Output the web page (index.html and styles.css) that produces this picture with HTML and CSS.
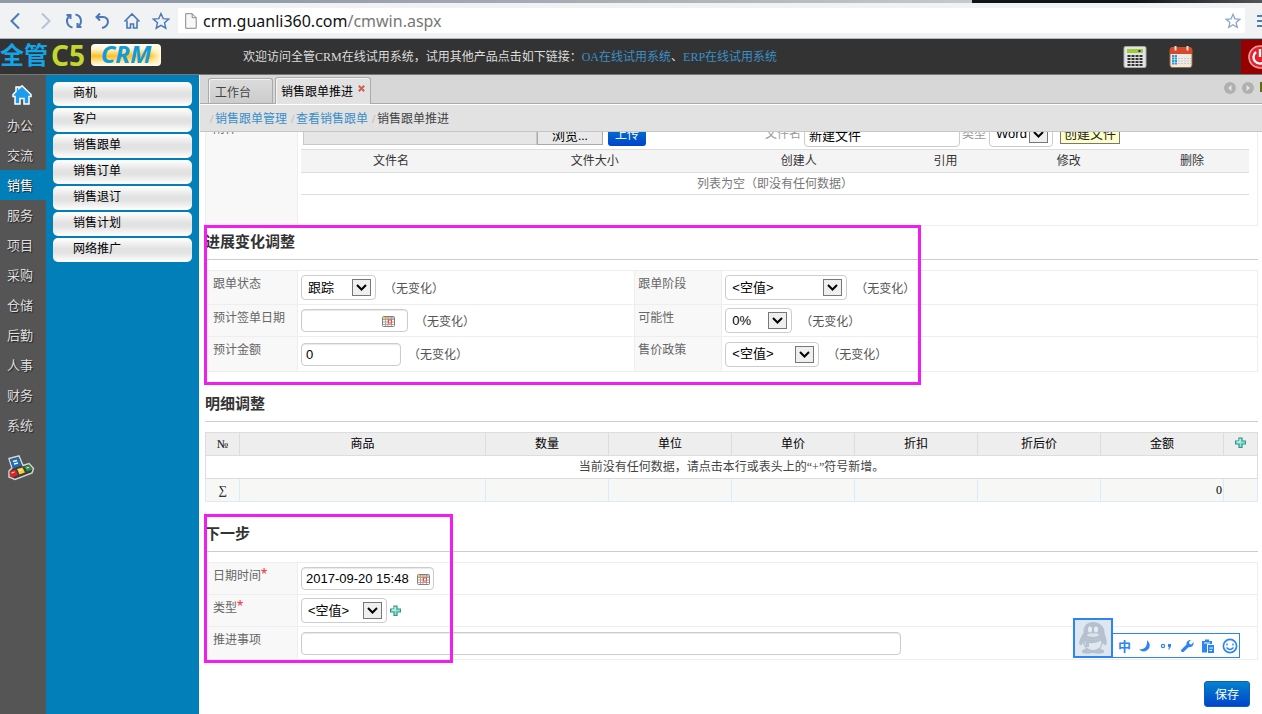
FILE: index.html
```html
<!DOCTYPE html>
<html lang="zh-CN">
<head>
<meta charset="utf-8">
<title>销售跟单推进</title>
<link rel="stylesheet" href="styles.css">
</head>
<body>
<svg class="defs" width="0" height="0" aria-hidden="true">
  <symbol id="chev" viewBox="0 0 19 17"><rect x=".5" y=".5" width="18" height="16" fill="#efefef" stroke="#777"/><path d="M5 6l4.500 4.500L14 6" fill="none" stroke="#000" stroke-width="2"/></symbol>
  <symbol id="cal" viewBox="0 0 13 11"><rect x=".5" y=".5" width="12" height="10" rx="1" fill="#fff" stroke="#8a7f78"/><path d="M1 1h6v2H1z" fill="#f3cf57"/><path d="M7 1h5v2H7z" fill="#a9c6ea"/><path d="M1 3.500h11M1 6h11M1 8.500h11M3.500 1v9M6 1v9M9.500 1v9" stroke="#a79c96" stroke-width=".9"/><rect x="6.500" y="4" width="3" height="3" fill="#fff" stroke="#f04a3c"/></symbol>
  <symbol id="plus" viewBox="0 0 11 11"><path d="M4 1h3v3h3.500v3H7v3.500H4V7H.5V4H4z" fill="#8fe3d5" stroke="#2f9488" stroke-width="1.200"/><path d="M5 2v3H2" fill="none" stroke="#d8fff6"/></symbol>
  <symbol id="star" viewBox="0 0 18 18"><path d="M9 1.500l2.200 5.100 5.500.5-4.200 3.600 1.300 5.500L9 13.300l-4.800 2.900 1.300-5.500L1.300 7.100l5.500-.5z" fill="none" stroke="currentColor" stroke-width="1.400"/></symbol>
</svg>

<header class="browser">
  <div class="tabstrip"></div>
  <div class="toolbar">
    <nav class="tools">
      <button aria-label="后退"><svg width="18" height="18" viewBox="0 0 18 18"><path d="M12 1.500L4.500 9l7.500 7.500" class="ln"/></svg></button>
      <button class="dim" aria-label="前进"><svg width="18" height="18" viewBox="0 0 18 18"><path d="M6 1.500L13.500 9 6 16.500" class="ln"/></svg></button>
      <button aria-label="刷新"><svg width="18" height="18" viewBox="0 0 18 18"><path d="M7.500 15.500C2 14.500 0 8 4.500 3.500M1.500 3h4v4M10.500 2.500C16 3.500 18 10 13.500 14.500M16.500 15h-4v-4" class="ln"/></svg></button>
      <button aria-label="撤销"><svg width="18" height="18" viewBox="0 0 18 18"><path d="M6 1.500L2.500 5 6 8.500M3 5h6c6.500 0 7 9-1 11" class="ln"/></svg></button>
      <button aria-label="主页"><svg width="18" height="18" viewBox="0 0 18 18"><path d="M1.500 9.500L9 2l7.500 7.500M4 8.500V16h3.500v-4h3v4H14V8.500" class="ln thin"/></svg></button>
      <button aria-label="收藏"><svg width="18" height="18"><use href="#star"/></svg></button>
    </nav>
    <div class="address">
      <svg width="12" height="16" viewBox="0 0 12 16"><path d="M.7.7h6.500l4 4v10.600H.7z" fill="#f8f8f8" stroke="#888"/><path d="M7.200.7v4h4" fill="none" stroke="#888"/></svg>
      <span class="url">crm.guanli360.com<span class="path">/cmwin.aspx</span></span>
      <svg class="fav" width="16" height="16"><use href="#star"/></svg>
    </div>
    <button class="menu" aria-label="菜单"><svg width="16" height="14" viewBox="0 0 16 14"><path d="M0 2h16M0 7h16M0 12h16" stroke="#4a7ebb" stroke-width="2"/></svg></button>
  </div>
</header>

<header class="apphead">
  <div class="logo"><span class="cn">全管</span><span class="c5">C5</span><span class="crm">CRM</span></div>
  <p class="welcome">欢迎访问全管CRM在线试用系统，试用其他产品点击如下链接：<a href="#">OA在线试用系统</a>、<a href="#">ERP在线试用系统</a></p>
  <div class="actions">
    <button aria-label="计算器"><svg width="24" height="22" viewBox="0 0 24 22"><rect x="1" y=".5" width="22" height="21" rx="1.500" fill="#e4e4e4" stroke="#aaa"/><rect x="4" y="3" width="16" height="4" fill="#9ccc3c"/><path d="M15.500 4h2v2h-2z" fill="#234"/><g stroke="#333" stroke-width="2" stroke-dasharray="3 1"><path d="M4.500 10h15M4.500 13h15M4.500 16h15M4.500 19h15"/></g></svg></button>
    <button aria-label="日历"><svg width="24" height="22" viewBox="0 0 24 22"><rect x="1" y="1.500" width="22" height="20" rx="2.500" fill="#eeeae6" stroke="#a9692d"/><path d="M1 8V4q0-2.500 2.500-2.500h17Q23 1.500 23 4v4z" fill="#d9482b"/><path d="M6.500 0v4.500M18.500 0v4.500" stroke="#f3dcd5" stroke-width="2"/><path d="M3 10h5M3 12.500h5M3 15h5M3 17.500h5" stroke="#2e95dc" stroke-width="2" stroke-dasharray="2.200 .6"/><path d="M9 12.500h13M9 15h13M9 17.500h13" stroke="#cfcac6" stroke-dasharray="2 1"/></svg></button>
    <button class="power" aria-label="退出"><svg width="24" height="24" viewBox="0 0 24 24"><circle cx="12" cy="12" r="11" fill="#e3202c" stroke="#f7a0a0" stroke-width="1.600"/><path d="M8 7a6.500 6.500 0 1 0 8 0M12 4v8" fill="none" stroke="#fff" stroke-width="2.400"/></svg></button>
  </div>
</header>

<div class="shell">
  <nav class="rail">
    <a class="home" href="#" aria-label="首页"><svg width="20" height="20" viewBox="0 0 20 20"><path d="M10 .8L19 9.500v2h-2V19h-5v-5.500H8V19H3v-7.500H1v-2L4 6.500V2h3v1.500z" fill="#1b9cf0" stroke="#fff" stroke-width="1.500"/></svg></a>
    <a href="#">办公</a><a href="#">交流</a><a href="#" class="on">销售</a><a href="#">服务</a><a href="#">项目</a><a href="#">采购</a><a href="#">仓储</a><a href="#">后勤</a><a href="#">人事</a><a href="#">财务</a><a href="#">系统</a>
    <a class="apps" href="#" aria-label="应用"><svg width="28" height="26" viewBox="0 0 28 26"><path d="M2 3.500L12 1l4 9.500 6-2 4.500 5-1.500 4.500L8 24.500 2 22v-6l3-3z" fill="#3c3c3c" stroke="#d5d5d5" stroke-width="1.500"/><path d="M3 4.500l8.500-2.200 3 8.200-8.500 3z" fill="#2869b4"/><path d="M6 6.500l4-1M7 9l4-1" stroke="#dff" stroke-width="1.300"/><path d="M2.500 16.500l6-2 2.500 5.500-6 2.500-2-1.500z" fill="#dc2523"/><path d="M10 14l5.500-1.500 2.500 5-5.500 2z" fill="#f6ce34"/><path d="M17 11.500l5-1.500 3.500 4.500-5.500 2z" fill="#2f9044"/><path d="M4.500 18l3-1M12 15.500l2.500-.7M19.500 13l2.500-.7" stroke="#fff"/></svg></a>
  </nav>
  <nav class="submenu">
    <a href="#">商机</a><a href="#">客户</a><a href="#">销售跟单</a><a href="#">销售订单</a><a href="#">销售退订</a><a href="#">销售计划</a><a href="#">网络推广</a>
  </nav>
  <main class="main">
    <div class="tabs">
      <a href="#" class="tab">工作台</a>
      <a href="#" class="tab cur">销售跟单推进<svg width="7" height="7" viewBox="0 0 7 7"><path d="M.8.800l5.400 5.400M6.200.8L.8 6.200" stroke="#cb6256" stroke-width="2"/></svg></a>
      <div class="pager">
        <button aria-label="上一个"><svg width="12" height="12" viewBox="0 0 12 12"><circle cx="6" cy="6" r="6" fill="#b0b0b0"/><path d="M7.500 3v6L4 6z" fill="#e4e4e4"/></svg></button>
        <button aria-label="下一个"><svg width="12" height="12" viewBox="0 0 12 12"><circle cx="6" cy="6" r="6" fill="#b0b0b0"/><path d="M4.500 3v6L8 6z" fill="#e4e4e4"/></svg></button>
        <i></i>
      </div>
    </div>
    <div class="crumbs"><i>/</i><a href="#">销售跟单管理</a><i>/</i><a href="#">查看销售跟单</a><i>/</i><span>销售跟单推进</span></div>

    <div class="viewport">
      <form class="page">
        <div class="attach">
          <div class="lab">附件</div>
          <div class="files">
            <div class="filebar">
              <input class="picked" aria-label="附件" readonly><button type="button" class="browse">浏览...</button>
              <button type="button" class="blue">上传</button>
              <label class="fname" for="fname">文件名</label><input id="fname" class="box" value="新建文件">
              <label class="ftype" for="ftype">类型</label><span class="sel w64"><select id="ftype"><option>Word</option></select><svg><use href="#chev"/></svg></span>
              <button type="button" class="create">创建文件</button>
            </div>
            <table class="filelist">
              <colgroup><col class="f1"><col class="f2"><col class="f3"><col class="f4"><col class="f5"><col class="f6"></colgroup>
              <thead><tr><th>文件名</th><th>文件大小</th><th>创建人</th><th>引用</th><th>修改</th><th>删除</th></tr></thead>
              <tbody><tr><td colspan="6">列表为空（即没有任何数据）</td></tr></tbody>
            </table>
          </div>
        </div>

        <section class="part">
          <h3>进展变化调整</h3>
          <div class="fields two">
            <label for="s1">跟单状态</label>
            <div><span class="sel w75"><select id="s1"><option>跟踪</option></select><svg><use href="#chev"/></svg></span><em>（无变化）</em></div>
            <label for="s2">跟单阶段</label>
            <div><span class="sel w122"><select id="s2"><option>&lt;空值&gt;</option></select><svg><use href="#chev"/></svg></span><em>（无变化）</em></div>
            <label for="d1">预计签单日期</label>
            <div><span class="date w107"><input id="d1" class="box"><svg><use href="#cal"/></svg></span><em>（无变化）</em></div>
            <label for="s3">可能性</label>
            <div><span class="sel w67"><select id="s3"><option>0%</option></select><svg><use href="#chev"/></svg></span><em>（无变化）</em></div>
            <label for="n1">预计金额</label>
            <div><input id="n1" class="box w100" value="0"><em>（无变化）</em></div>
            <label for="s4">售价政策</label>
            <div><span class="sel w94"><select id="s4"><option>&lt;空值&gt;</option></select><svg><use href="#chev"/></svg></span><em>（无变化）</em></div>
          </div>
          <i class="mark wide"></i>
        </section>

        <section class="part">
          <h3>明细调整</h3>
          <table class="grid">
            <colgroup><col class="edge"><col class="goods"><col><col><col><col><col><col><col class="edge"></colgroup>
            <thead><tr><th>№</th><th>商品</th><th>数量</th><th>单位</th><th>单价</th><th>折扣</th><th>折后价</th><th>金额</th><th><button type="button" class="add" aria-label="新增"><svg width="11" height="11"><use href="#plus"/></svg></button></th></tr></thead>
            <tbody><tr><td colspan="9">当前没有任何数据，请点击本行或表头上的“+”符号新增。</td></tr></tbody>
            <tfoot><tr><td class="sum">∑</td><td></td><td></td><td></td><td></td><td></td><td></td><td class="num">0</td><td></td></tr></tfoot>
          </table>
        </section>

        <section class="part">
          <h3>下一步</h3>
          <div class="fields one">
            <label for="t1">日期时间<b>*</b></label>
            <div><span class="date w133"><input id="t1" class="box" value="2017-09-20 15:48"><svg><use href="#cal"/></svg></span></div>
            <label for="s5">类型<b>*</b></label>
            <div><span class="sel w86"><select id="s5"><option>&lt;空值&gt;</option></select><svg><use href="#chev"/></svg></span><button type="button" class="add" aria-label="新增类型"><svg width="11" height="11"><use href="#plus"/></svg></button></div>
            <label for="m1">推进事项</label>
            <div><input id="m1" class="box w600"></div>
          </div>
          <i class="mark narrow"></i>
        </section>
        <div class="foot"><button type="button" class="blue save">保存</button></div>
      </form>
    </div>
  </main>
</div>

<div class="ime">
  <span class="penguin"><svg width="32" height="34" viewBox="0 0 32 34"><path d="M16 1C9 1 6 6 6.500 12 3 17 1 22 3 24q1 1 3-2 1 4 3 5.500Q4 29 5 31.500q2 2 11 .5 9 1.500 11-.5 1-2.500-4-4 2-1.500 3-5.500 2 3 3 2 2-2-1.500-12C28 6 23 1 16 1z" fill="#b5c1cf"/><path d="M9 17q7 4 14 0 3 6-1 10-6 4-12 0-4-4-1-10z" fill="#e2e7ee"/><ellipse cx="13" cy="8.500" rx="2" ry="3" fill="#e8edf3"/><ellipse cx="19" cy="8.500" rx="2" ry="3" fill="#e8edf3"/><ellipse cx="16" cy="14" rx="6" ry="1.800" fill="#dce3eb"/><path d="M7 16q9 6 18 0l1 2.500q-9 5-14 3.500v4H8.500v-5L6 18.500z" fill="#b5c1cf"/></svg></span>
  <div class="imebar">
    <span class="zh">中</span>
    <svg width="14" height="14" viewBox="0 0 14 14"><path d="M9 1q5 5 1 9.500-4 4-9 0 5 0 7-3 1.500-3 1-6.500z" fill="#2a86f3"/></svg>
    <svg width="14" height="14" viewBox="0 0 14 14"><circle cx="4" cy="7" r="1.600" fill="none" stroke="#2a86f3" stroke-width="1.200"/><path d="M9 5h3q.5 4-3 6 1-2 1-3H9z" fill="#2a86f3"/></svg>
    <svg width="14" height="14" viewBox="0 0 14 14"><path d="M1 11l5.500-5.500Q6 2 9.500 1H11L9 3l.5 2 2 .5L13.500 3v2q-1 3.500-5 3.300L3.500 13H2l-1-1z" fill="#2a86f3"/></svg>
    <svg width="14" height="14" viewBox="0 0 14 14"><path d="M1 2h3V.500h4V2h3v3H6v8.500H1z" fill="#2a86f3"/><path d="M7 6h6v8H7z" fill="#2a86f3"/><path d="M3 4h6" stroke="#fff"/><path d="M8.500 9H12M8.500 11.500H11" stroke="#fff"/></svg>
    <svg width="16" height="16" viewBox="0 0 16 16"><circle cx="8" cy="8" r="6.600" fill="none" stroke="#2a86f3" stroke-width="1.700"/><path d="M5 5.500v2M11 5.500v2M4.500 9.500q3.500 4 7 0" fill="none" stroke="#2a86f3" stroke-width="1.400"/></svg>
  </div>
</div>
</body>
</html>
```
FILE: styles.css
```css
* { box-sizing: border-box; }
html, body { margin: 0; height: 100%; }
body {
  display: flex; flex-direction: column; overflow: hidden; background: #fff; color: #333;
  font: 12px/16px "Liberation Serif", "Noto Sans CJK SC", serif;
}
button, input, select { font-family: inherit; font-size: inherit; margin: 0; padding: 0; }
button { border: 0; background: none; cursor: pointer; }
a { color: #3a8fc8; text-decoration: none; }
i, em { font-style: normal; }
svg { display: block; flex: none; }
.defs { position: absolute; }

/* browser chrome */
.browser { flex: none; background: #f1f2f4; border-bottom: 1px solid #a9b7c2; }
.tabstrip { height: 3px; background: linear-gradient(90deg, #8f9aa6 0 16%, #a9afb5 48%, #c5c8cc 77%, #10151a 77% 90%, #555 100%); }
.toolbar { display: flex; align-items: center; height: 35px; padding-left: 7px; overflow: hidden; }
.tools { display: flex; gap: 11px; color: #4a78b8; }
.tools button { color: inherit; }
.tools .dim { color: #b3c3da; }
.ln { fill: none; stroke: currentColor; stroke-width: 2; }
.thin { stroke-width: 1.600; }
.address { flex: 1; display: flex; align-items: center; gap: 6px; height: 25px; margin-left: 8px; padding: 0 4px 0 7px; background: #fff; }
.url { flex: 1; font: 16px/24px "Noto Sans", "Open Sans", sans-serif; color: #111; }
.url .path { color: #777; }
.fav { color: #8ba4cb; }
.menu { flex: none; width: 5px; overflow: hidden; margin-left: 12px; }

/* application header */
.apphead { flex: none; display: flex; align-items: center; height: 36px; background: #333; border-bottom: 1px solid #777; }
.logo { display: flex; align-items: center; flex: none; width: 243px; padding-bottom: 4px; font: bold 24px/32px "Noto Sans", "Noto Sans CJK SC", sans-serif; white-space: nowrap; }
.logo .cn { color: #13a5e8; }
.logo .c5 { margin-left: 3px; font-size: 28px; color: #c3d82e; width: 40px; }
.logo .crm { height: 22px; width: 70px; border-radius: 4px; text-align: center; line-height: 20px; font-size: 24px; font-style: italic; color: #119ade; background: linear-gradient(90deg, transparent 85%, #fffbe0), linear-gradient(#fff, #fff3c4 25%, #fbc02a 55%, #fde9a0 80%, #fff); }
.welcome { flex: 1; margin: 0; color: #ddd; }
.actions { display: flex; align-items: center; gap: 22px; flex: none; }
.actions .power { width: 21px; height: 34px; margin-left: 26px; padding-left: 7px; background: #970000; overflow: hidden; }

.shell { flex: 1; display: flex; min-height: 0; }
.rail { flex: none; width: 46px; background: #555; display: flex; flex-direction: column; }
.rail a { height: 30px; padding-left: 7px; font-size: 13px; line-height: 32px; color: #ddd; text-shadow: 1px 1px 1px #222; }
.rail .on { background: #027fb9; color: #fff; }
.rail .home { height: 35px; padding: 10px 12px 0; }
.rail .apps { height: 50px; padding-top: 15px; }
.submenu { flex: none; width: 153px; padding: 7px; background: #027fb9; display: flex; flex-direction: column; gap: 2px; }
.submenu a { height: 24px; padding-left: 20px; line-height: 22px; border-radius: 5px; color: #000; background: linear-gradient(#fff, #e2e2e2 45%, #e2e2e2 60%, #fff); }

.main { flex: 1; min-width: 0; margin-left: 1px; display: flex; flex-direction: column; }
.tabs { flex: none; display: flex; align-items: flex-end; gap: 2px; height: 29px; padding-left: 8px; background: #d7d7d7; border-bottom: 1px solid #aaa; }
.tab { height: 25px; padding: 0 21px 0 6px; line-height: 28px; border: 1px solid #aaa; border-bottom: 0; border-radius: 3px 3px 0 0; color: #444; background: linear-gradient(#dcdcdc, #ccc); box-shadow: inset 1px 1px #f4f4f4; }
.tab.cur { display: flex; gap: 5px; padding: 0 5px; margin-bottom: -1px; height: 27px; line-height: 28px; color: #000; background: #e2e2e2; }
.tab.cur svg { margin-top: 7px; }
.pager { flex: 1; display: flex; justify-content: flex-end; gap: 6px; padding-bottom: 9px; }
.pager i { width: 2px; height: 10px; background: #66680c; }
.crumbs { flex: none; height: 28px; padding-left: 10px; line-height: 28px; background: #e2e2e2; border-top: 1px solid #fff; border-bottom: 1px solid #c6c6c6; display: flex; color: #444; }
.crumbs i { width: 5px; color: #aaa; }
.crumbs a { margin-right: 4px; }

/* scrolled document */
.viewport { flex: 1; overflow: hidden; }
.page { margin: -20px 4px 0 5px; }
.attach { display: flex; height: 114px; border: 1px solid #eee; }
.lab { flex: none; width: 92px; padding: 8px 7px; color: #666; background: #f8f8f8; border-right: 1px solid #eee; }
.files { flex: 1; padding: 6px 8px 0 3px; }
.filebar { display: flex; align-items: center; height: 30px; color: #999; }
.picked { width: 234px; height: 22px; margin-left: 2px; background: #e6e6e6; border: 1px solid #c8c8c8; }
.browse { width: 66px; height: 22px; font-size: 13px; color: #000; background: #e9e9e9; border: 1px solid #aaa; }
.blue { height: 24px; width: 38px; margin-left: 5px; color: #fff; border-radius: 3px; background: linear-gradient(#0483cc, #0044cc); }
.fname { margin: 0 3px 0 119px; }
.filebar .box { width: 156px; height: 25px; }
.ftype { margin: 0 3px 0 2px; }
.create { width: 60px; height: 19px; margin-left: 7px; background: #ffffc8; border: 1px solid #777; color: #222; font-size: 13px; line-height: 16px; }

.box { height: 23px; padding: 0 4px; border: 1px solid #ccc; border-radius: 4px; box-shadow: inset 0 1px 1px #e8e8e8; color: #000; background: #fff; font: 13px/20px "Liberation Sans", "Noto Sans CJK SC", sans-serif; }
.sel { position: relative; display: inline-block; flex: none; }
.sel select { appearance: none; display: block; width: 100%; height: 25px; padding: 0 6px; border: 1px solid #ccc; border-radius: 4px; background: #fff; color: #000; font: 13px/20px "Liberation Sans", "Noto Sans CJK SC", sans-serif; }
.sel svg { position: absolute; right: 5px; top: 4px; width: 19px; height: 17px; pointer-events: none; }
.date { position: relative; flex: none; }
.date .box { display: block; width: 100%; }
.date svg { position: absolute; right: 4px; top: 7px; width: 13px; height: 11px; }
.date.w107 svg { right: 13px; }
.w64 { width: 64px; } .w67 { width: 67px; } .w75 { width: 75px; } .w86 { width: 86px; } .w94 { width: 94px; }
.w100 { width: 100px; } .w107 { width: 107px; } .w122 { width: 122px; } .w133 { width: 133px; } .w600 { width: 600px; }

table { width: 100%; table-layout: fixed; border-collapse: collapse; text-align: center; }
th { font-weight: normal; padding: 0; }
td { padding: 0; }
.filelist tr { height: 22px; border: solid #ddd; border-width: 1px 0; }
.filelist th { height: 23px; background: #f4f4f4; }
.filelist td { color: #777; }
.f1 { width: 19%; } .f2 { width: 24%; } .f3 { width: 19%; } .f4 { width: 12%; } .f5 { width: 14%; } .f6 { width: 12%; }

.part { position: relative; }
.part h3 { margin: 0 0 10px; height: 34px; font-size: 15px; line-height: 32px; border-bottom: 1px solid #ccc; color: #333; }
.part + .part h3 { margin-top: 15px; }
.part + .part { padding-top: 1px; }
.fields { display: grid; border: solid #eee; border-width: 1px 1px 0; }
.two { grid-template: 34px 32px 35px / 92px 32% 88px 1fr; }
.one { grid-template: 32px 32px 33px / 92px 1fr; }
.fields > * { border-bottom: 1px solid #eee; }
.fields > label { padding: 4px 0 0 7px; line-height: 18px; color: #666; background: #f8f8f8; border-right: 1px solid #eee; }
.two > label:nth-child(4n + 3) { padding-left: 3px; border-left: 1px solid #eee; }
.fields > div { display: flex; align-items: center; padding-left: 3px; }
.fields em { margin-left: 8px; padding-top: 2px; color: #555; }
.fields .date + em, .fields .box + em { margin-left: 7px; }
.fields b { color: #f33; font: 16px/12px "Liberation Sans", sans-serif; }
.fields .add { margin-left: 3px; }
.mark { position: absolute; left: -1px; border: 3px solid #f31cf3; pointer-events: none; }
.wide { top: -1px; width: 717px; height: 160px; }
.narrow { top: 12px; width: 249px; height: 149px; }

.grid { color: #000; }
.grid tr { height: 23px; }
.grid th, .grid td { border: 1px solid #ddd; }
.grid th { background: #eee; }
.grid tbody td { color: #444; }
.grid tfoot td { background: #f7f7f6; border-color: #ddd #d9ebfa #d9ebfa; }
.grid .num { text-align: right; padding-right: 1px; }
.edge { width: 34px; } .goods { width: 246px; }
.foot { display: flex; justify-content: flex-end; padding: 21px 8px 0; }
.save { width: 46px; height: 26px; border: 1px solid #0a62b8; }

/* input-method floating bar */
.ime { position: fixed; right: 22px; bottom: 56px; display: flex; align-items: flex-end; }
.penguin { width: 40px; height: 40px; padding: 1px 2px; border: 2px solid #2a86f3; background: #dfe6ef; }
.imebar { display: flex; align-items: center; gap: 7px; height: 25px; width: 127px; padding: 0 3px 0 5px; border: 1px solid #2a86f3; border-left: 0; background: #fff; }
.zh { font: bold 13px/20px "Noto Sans CJK SC", sans-serif; color: #2a86f3; }
```
